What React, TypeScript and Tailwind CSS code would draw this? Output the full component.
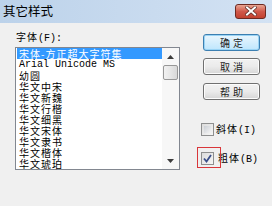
import React from "react";

const items = [
  "幼圆",
  "华文中宋",
  "华文新魏",
  "华文行楷",
  "华文细黑",
  "华文宋体",
  "华文隶书",
  "华文楷体",
  "华文琥珀",
];

const mono = { fontFamily: '"Liberation Mono", monospace' };

function Btn({ label, def }: { label: string; def?: boolean }) {
  return (
    <div
      className={
        "h-[17px] w-[57px] rounded-[3px] border flex items-center justify-center text-[10px] leading-none text-[#1e1e1e] " +
        (def
          ? "border-[#3c7fb1] bg-gradient-to-b from-[#eaf6fd] to-[#bee6fd] shadow-[inset_0_0_0_1px_#9ad4f5]"
          : "border-[#707070] bg-gradient-to-b from-[#f2f2f2] via-[#ebebeb] to-[#d6d6d6] shadow-[inset_0_0_0_1px_#fcfcfc]")
      }
    >
      <span className="tracking-[3px] pl-[3px]">{label}</span>
    </div>
  );
}

export default function App() {
  return (
    <div
      className="w-[272px] h-[206px] bg-[#f0f0f0] flex flex-col overflow-hidden"
      style={{ fontFamily: '"Noto Sans CJK SC", "Liberation Sans", sans-serif' }}
    >
      <div className="h-[23px] bg-gradient-to-r from-[#bcd2ea] to-[#d3e2f3] flex items-center justify-between pl-[3px] pr-[6px] shrink-0">
        <span className="text-[12.5px] leading-none text-black">其它样式</span>
        <div className="w-[31px] h-[15px] rounded-[3px] border border-[#6d2a22] bg-gradient-to-b from-[#e8a593] via-[#d0584a] to-[#c2412f] flex items-center justify-center mt-[-1px]">
          <svg width="12" height="10" viewBox="0 0 12 10">
            <path d="M2 1.5 L10 8.5 M10 1.5 L2 8.5" stroke="#5a2a24" strokeWidth="3.4" strokeLinecap="square" />
            <path d="M2 1.5 L10 8.5 M10 1.5 L2 8.5" stroke="#ffffff" strokeWidth="2" strokeLinecap="square" />
          </svg>
        </div>
      </div>
      <div className="flex flex-1">
        <div className="pl-[15px] pt-[8px] flex flex-col">
          <div className="pl-[1px] h-[12px] text-[10px] leading-[12px] tracking-[1px] text-black whitespace-nowrap">
            字体<span style={mono} className="text-[10px] tracking-normal">(F):</span>
          </div>
          <div className="mt-[4px] w-[165px] h-[123px] border border-[#828790] bg-white flex">
            <div className="flex-1 pl-[1px] flex flex-col">
              <div className="h-[11px] bg-[#3399ff] text-white text-[10px] leading-[11px] tracking-[1px] pl-[2px] whitespace-nowrap">
                宋体-方正超大字符集
              </div>
              <div className="h-[11px] text-[10px] leading-[11px] pl-[2px] text-black whitespace-nowrap" style={mono}>
                Arial Unicode MS
              </div>
              {items.map((t) => (
                <div
                  key={t}
                  className="h-[11px] text-[10px] leading-[11px] tracking-[1px] pl-[2px] text-black whitespace-nowrap"
                >
                  {t}
                </div>
              ))}
            </div>
            <div className="w-[17px] bg-[#f7f7f7] flex flex-col items-center">
              <div className="h-[17px] w-full flex items-center justify-center">
                <svg width="7" height="4" viewBox="0 0 7 4">
                  <path d="M3.5 0 L7 4 L0 4 Z" fill="#3c3c3c" />
                </svg>
              </div>
              <div className="w-[15px] h-[15px] rounded-[2px] border border-[#979797] bg-gradient-to-r from-[#f1f1f1] via-[#e6e6e6] to-[#d8d8d8]" />
              <div className="flex-1" />
              <div className="h-[17px] w-full flex items-center justify-center">
                <svg width="7" height="4" viewBox="0 0 7 4">
                  <path d="M0 0 L7 0 L3.5 4 Z" fill="#3c3c3c" />
                </svg>
              </div>
            </div>
          </div>
        </div>
        <div className="ml-auto mr-[12px] flex flex-col w-[57px] pt-[11px]">
          <Btn label="确定" def />
          <div className="h-[7px]" />
          <Btn label="取消" />
          <div className="h-[8px]" />
          <Btn label="帮助" />
          <div className="h-[23px]" />
          <div className="flex items-center h-[13px] gap-[2px] ml-[-2px]">
            <div className="w-[13px] h-[13px] border border-[#8e8f8f] bg-gradient-to-br from-[#dcdcdc] to-[#f6f6f6] p-[2px]">
              <div className="w-full h-full bg-gradient-to-br from-[#cbcfd5] to-[#f4f4f4]" />
            </div>
            <span className="text-[10px] leading-none tracking-[1px] text-black whitespace-nowrap">
              斜体<span style={mono} className="tracking-normal">(I)</span>
            </span>
          </div>
          <div className="h-[16px]" />
          <div className="relative flex items-center h-[13px] gap-[2px] ml-[-2px]">
            <div className="w-[13px] h-[13px] border border-[#8e8f8f] bg-gradient-to-br from-[#dcdcdc] to-[#f6f6f6] flex items-center justify-center">
              <svg width="9" height="9" viewBox="0 0 9 9">
                <path d="M1 4.5 L3.5 7.5 L8 1" stroke="#3b4f8a" strokeWidth="1.8" fill="none" />
              </svg>
            </div>
            <span className="text-[10px] leading-none tracking-[1px] text-black whitespace-nowrap ml-[2px]">
              粗体<span style={mono} className="tracking-normal">(B)</span>
            </span>
            <div className="absolute left-[-4px] top-[-5px] w-[24px] h-[21px] border border-[#d9363a]" />
          </div>
        </div>
      </div>
    </div>
  );
}
